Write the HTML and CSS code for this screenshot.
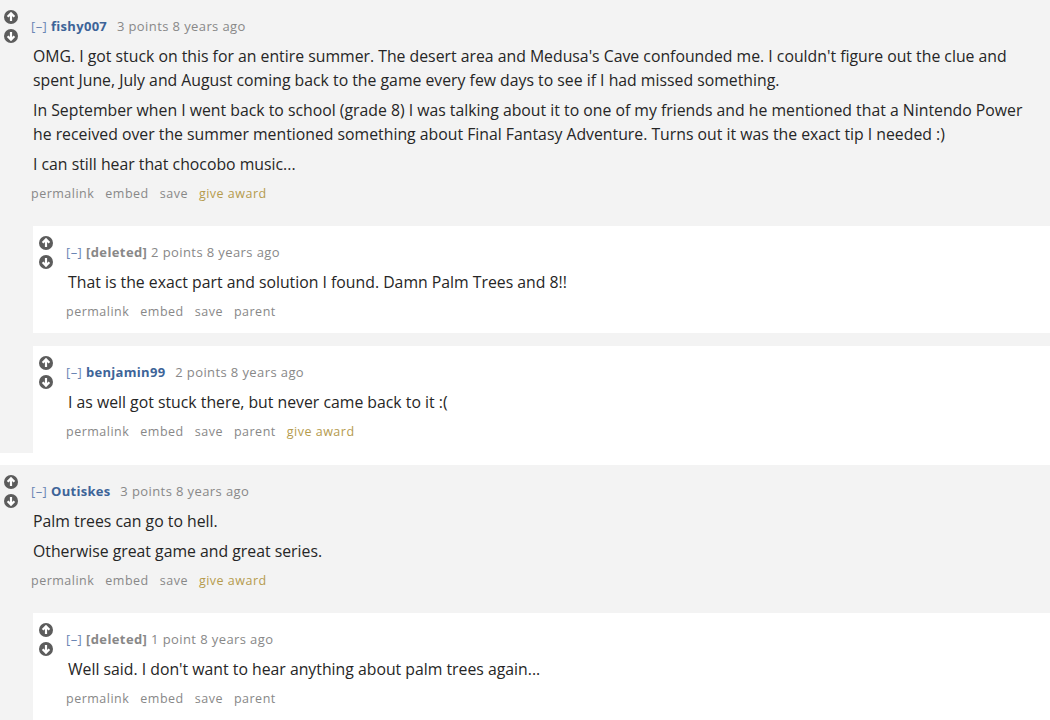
FILE: index.html
```html
<!DOCTYPE html>
<html lang="en">

<head>
    <meta charset="UTF-8" />
    <title>comments</title>
    <link rel="stylesheet" href="styles.css">
</head>

<body>

    <div class="comment top">
        <div class="midcol">
            <svg class="arrow" viewBox="0 0 14 14"><circle cx="7" cy="7" r="7" /><path d="M7 11V3.5M3.6 6.8L7 3.4l3.4 3.4" /></svg>
            <svg class="arrow" viewBox="0 0 14 14"><circle cx="7" cy="7" r="7" /><path d="M7 3v7.5M3.6 7.2L7 10.6l3.4-3.4" /></svg>
        </div>
        <div class="entry">
            <p class="tagline"><span class="expand">[–]</span> <span class="author">fishy007</span> <span class="score">3 points 8 years ago</span></p>
            <div class="md">
                <p>OMG. I got stuck on this for an entire summer. The desert area and Medusa's Cave confounded me. I couldn't figure out the clue and spent June, July and August coming back to the game every few days to see if I had missed something.</p>
                <p>In September when I went back to school (grade 8) I was talking about it to one of my friends and he mentioned that a Nintendo Power he received over the summer mentioned something about Final Fantasy Adventure. Turns out it was the exact tip I needed :)</p>
                <p>I can still hear that chocobo music...</p>
            </div>
            <ul class="buttons">
                <li>permalink</li>
                <li>embed</li>
                <li>save</li>
                <li class="award">give award</li>
            </ul>
        </div>
        <div class="child">
            <div class="comment nested">
                <div class="midcol">
                    <svg class="arrow" viewBox="0 0 14 14"><circle cx="7" cy="7" r="7" /><path d="M7 11V3.5M3.6 6.8L7 3.4l3.4 3.4" /></svg>
                    <svg class="arrow" viewBox="0 0 14 14"><circle cx="7" cy="7" r="7" /><path d="M7 3v7.5M3.6 7.2L7 10.6l3.4-3.4" /></svg>
                </div>
                <div class="entry">
                    <p class="tagline"><span class="expand">[–]</span> <span class="deleted">[deleted]</span> <span class="score">2 points 8 years ago</span></p>
                    <div class="md">
                        <p>That is the exact part and solution I found. Damn Palm Trees and 8!!</p>
                    </div>
                    <ul class="buttons">
                        <li>permalink</li>
                        <li>embed</li>
                        <li>save</li>
                        <li>parent</li>
                    </ul>
                </div>
            </div>
            <div class="comment nested">
                <div class="midcol">
                    <svg class="arrow" viewBox="0 0 14 14"><circle cx="7" cy="7" r="7" /><path d="M7 11V3.5M3.6 6.8L7 3.4l3.4 3.4" /></svg>
                    <svg class="arrow" viewBox="0 0 14 14"><circle cx="7" cy="7" r="7" /><path d="M7 3v7.5M3.6 7.2L7 10.6l3.4-3.4" /></svg>
                </div>
                <div class="entry">
                    <p class="tagline"><span class="expand">[–]</span> <span class="author">benjamin99</span> <span class="score">2 points 8 years ago</span></p>
                    <div class="md">
                        <p>I as well got stuck there, but never came back to it :(</p>
                    </div>
                    <ul class="buttons">
                        <li>permalink</li>
                        <li>embed</li>
                        <li>save</li>
                        <li>parent</li>
                        <li class="award">give award</li>
                    </ul>
                </div>
            </div>
        </div>
    </div>

    <div class="comment top">
        <div class="midcol">
            <svg class="arrow" viewBox="0 0 14 14"><circle cx="7" cy="7" r="7" /><path d="M7 11V3.5M3.6 6.8L7 3.4l3.4 3.4" /></svg>
            <svg class="arrow" viewBox="0 0 14 14"><circle cx="7" cy="7" r="7" /><path d="M7 3v7.5M3.6 7.2L7 10.6l3.4-3.4" /></svg>
        </div>
        <div class="entry">
            <p class="tagline"><span class="expand">[–]</span> <span class="author">Outiskes</span> <span class="score">3 points 8 years ago</span></p>
            <div class="md">
                <p>Palm trees can go to hell.</p>
                <p>Otherwise great game and great series.</p>
            </div>
            <ul class="buttons">
                <li>permalink</li>
                <li>embed</li>
                <li>save</li>
                <li class="award">give award</li>
            </ul>
        </div>
        <div class="child">
            <div class="comment nested">
                <div class="midcol">
                    <svg class="arrow" viewBox="0 0 14 14"><circle cx="7" cy="7" r="7" /><path d="M7 11V3.5M3.6 6.8L7 3.4l3.4 3.4" /></svg>
                    <svg class="arrow" viewBox="0 0 14 14"><circle cx="7" cy="7" r="7" /><path d="M7 3v7.5M3.6 7.2L7 10.6l3.4-3.4" /></svg>
                </div>
                <div class="entry">
                    <p class="tagline"><span class="expand">[–]</span> <span class="deleted">[deleted]</span> <span class="score">1 point 8 years ago</span></p>
                    <div class="md">
                        <p>Well said. I don't want to hear anything about palm trees again...</p>
                    </div>
                    <ul class="buttons">
                        <li>permalink</li>
                        <li>embed</li>
                        <li>save</li>
                        <li>parent</li>
                    </ul>
                </div>
            </div>
        </div>
    </div>

</body>

</html>
```

FILE: styles.css
```css
* {
    margin: 0;
    padding: 0;
    box-sizing: border-box;
}

body {
    background-color: #ffffff;
    font-family: 'Open Sans', 'Noto Sans', sans-serif;
    color: #222222;
    overflow: hidden;
}

.comment {
    display: grid;
    grid-template-columns: 31px 1fr;
}

.top {
    background-color: #f3f3f3;
    margin-bottom: 12px;
}

.nested {
    background-color: #ffffff;
    padding-left: 2px;
    padding-bottom: 13px;
    margin-bottom: 13px;
}

.nested:last-child {
    margin-bottom: 0;
}

.midcol {
    display: flex;
    flex-direction: column;
    gap: 5px;
    padding: 10px 0 0 4px;
}

.arrow {
    width: 14px;
    height: 14px;
    display: block;
}

.arrow circle {
    fill: #5c5c5c;
}

.arrow path {
    fill: none;
    stroke: #ffffff;
    stroke-width: 2.2;
}

.entry {
    padding: 18px 8px 0 0;
}

.tagline {
    font-size: 13px;
    line-height: 16px;
    color: #888888;
    letter-spacing: 0.4px;
}

.expand {
    color: #6a86b4;
}

.author {
    color: #3d6498;
    font-weight: 700;
    letter-spacing: 0.3px;
    margin-right: 6px;
}

.deleted {
    color: #888888;
    font-weight: 700;
}

.md {
    padding: 10px 0 0 2px;
    font-size: 15.8px;
    line-height: 24px;
    color: #262626;
}

.md p {
    margin-bottom: 6px;
}

.md p:last-child {
    margin-bottom: 0;
}

.buttons {
    list-style: none;
    display: flex;
    gap: 11px;
    margin-top: 10px;
    font-size: 12.5px;
    line-height: 16px;
    color: #888888;
    letter-spacing: 0.5px;
}

.award {
    color: #b59b4e;
}

.child {
    grid-column: 2;
    margin: 24px 0 0 2px;
}
```
